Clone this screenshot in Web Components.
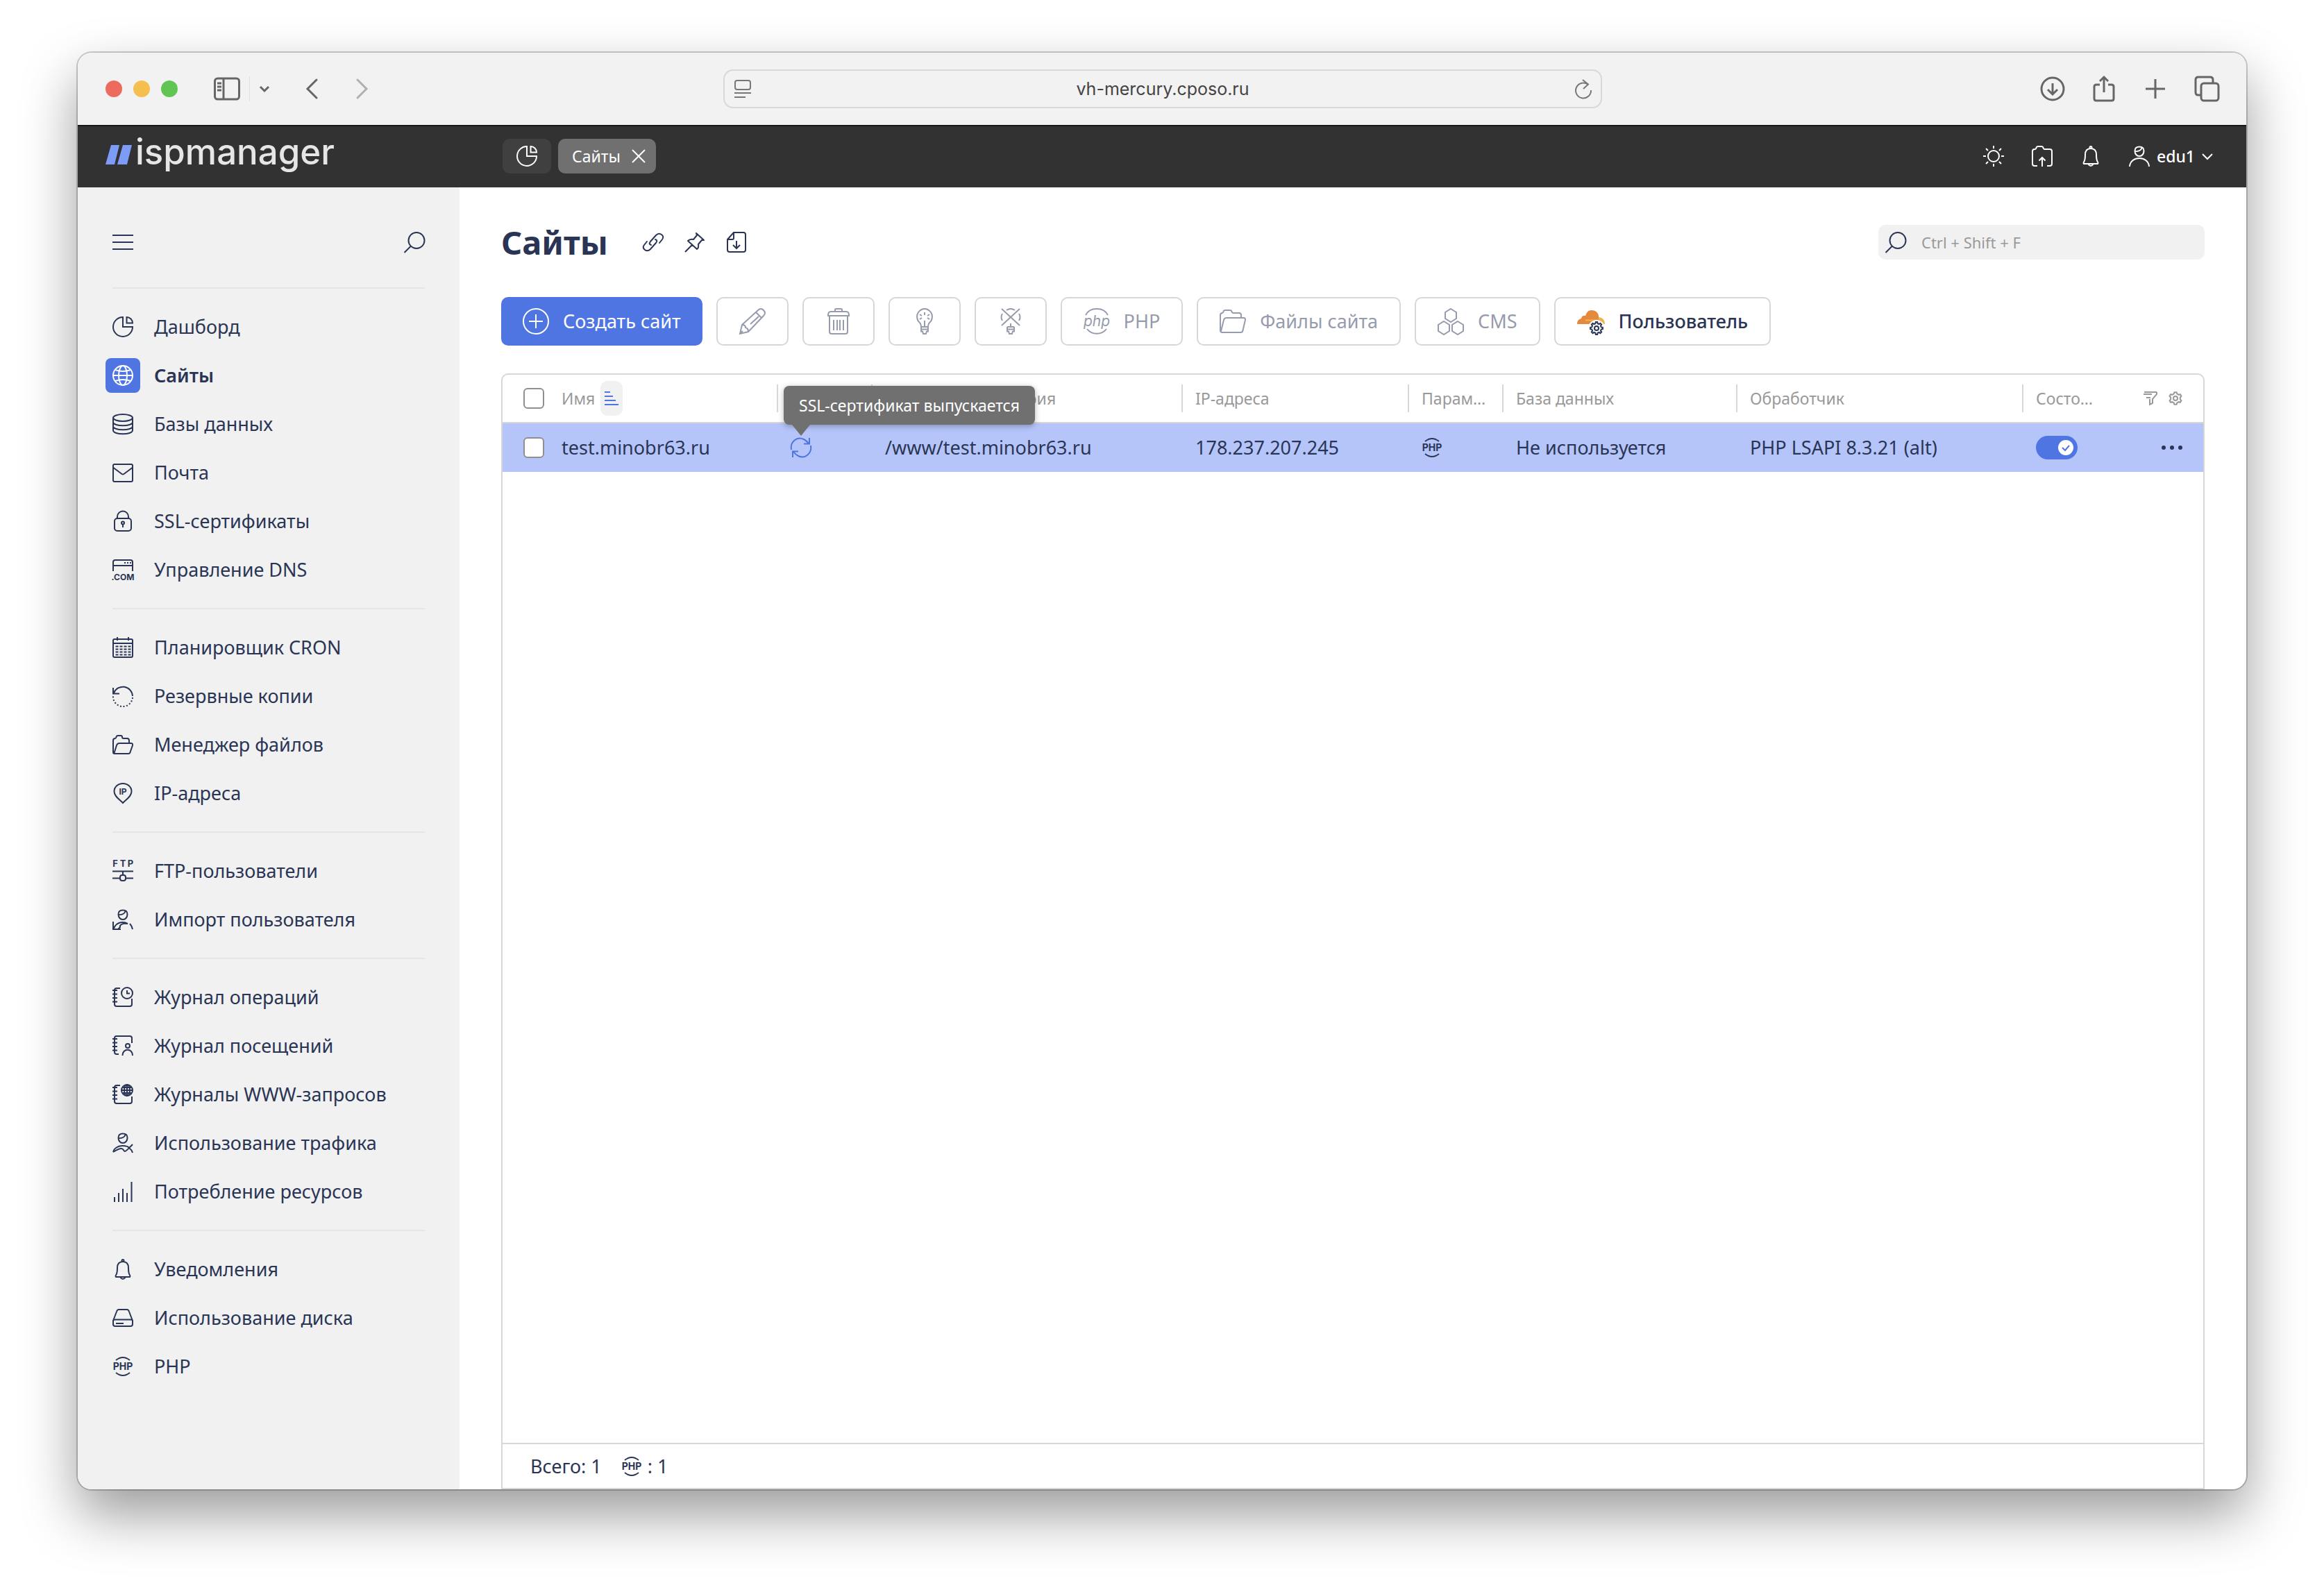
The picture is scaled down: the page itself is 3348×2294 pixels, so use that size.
<!DOCTYPE html>
<html lang="ru">
<head>
<meta charset="utf-8">
<title>Сайты</title>
<style>
  html, body { margin: 0; }
  body {
    --ui: "Noto Sans", "Open Sans", sans-serif;
    --ink: #2a3555;
    --blue: #4f75e3;
    --line: #d7d7d7;
    --panel: #f1f1f1;
    background: #fff;
    color: var(--ink);
    font: 400 27px/36px var(--ui);
  }
</style>
</head>
<body>
<mac-window>
  <browser-bar slot="bar"></browser-bar>
  <app-header slot="header"></app-header>
  <side-nav slot="nav">
    <nav-group>
      <nav-item icon="pie">Дашборд</nav-item>
      <nav-item icon="globe" active>Сайты</nav-item>
      <nav-item icon="db">Базы данных</nav-item>
      <nav-item icon="mail">Почта</nav-item>
      <nav-item icon="lock">SSL-сертификаты</nav-item>
      <nav-item icon="dns">Управление DNS</nav-item>
    </nav-group>
    <nav-group>
      <nav-item icon="calendar">Планировщик CRON</nav-item>
      <nav-item icon="restore">Резервные копии</nav-item>
      <nav-item icon="folder">Менеджер файлов</nav-item>
      <nav-item icon="ip">IP-адреса</nav-item>
    </nav-group>
    <nav-group>
      <nav-item icon="ftp">FTP-пользователи</nav-item>
      <nav-item icon="userimport">Импорт пользователя</nav-item>
    </nav-group>
    <nav-group>
      <nav-item icon="logclock">Журнал операций</nav-item>
      <nav-item icon="loguser">Журнал посещений</nav-item>
      <nav-item icon="logweb">Журналы WWW-запросов</nav-item>
      <nav-item icon="traffic">Использование трафика</nav-item>
      <nav-item icon="bars">Потребление ресурсов</nav-item>
    </nav-group>
    <nav-group>
      <nav-item icon="bell">Уведомления</nav-item>
      <nav-item icon="disk">Использование диска</nav-item>
      <nav-item icon="php">PHP</nav-item>
    </nav-group>
  </side-nav>
  <page-head>Сайты</page-head>
  <tool-bar>
    <tool-button kind="primary" icon="plus38">Создать сайт</tool-button>
    <tool-button icon="pencil" label="Изменить" disabled></tool-button>
    <tool-button icon="trash" label="Удалить" disabled></tool-button>
    <tool-button icon="bulb" label="Включить" disabled></tool-button>
    <tool-button icon="bulboff" label="Выключить" disabled></tool-button>
    <tool-button icon="php38" disabled>PHP</tool-button>
    <tool-button icon="folder38" disabled>Файлы сайта</tool-button>
    <tool-button icon="cms" disabled>CMS</tool-button>
    <tool-button icon="cloud">Пользователь</tool-button>
  </tool-bar>
  <sites-table></sites-table>
</mac-window>

<script>
const define = (name, html, setup) => {
  const tpl = document.createElement('template');
  tpl.innerHTML = '<style>*{box-sizing:border-box}button,input{font:inherit;color:inherit}button{border:0;background:none;padding:0;display:flex;align-items:center}</style>' + html;
  customElements.define(name, class extends HTMLElement {
    constructor() {
      super();
      this.attachShadow({ mode: 'open' }).append(tpl.content.cloneNode(true));
    }
    connectedCallback() { if (setup) setup(this, this.shadowRoot); }
  });
};

/* Outline of a cog wheel with n teeth, alternating between two radii. */
const gear = (cx, cy, outer, inner, n) => {
  const pts = [];
  for (let i = 0; i < n; i++) {
    [[-.3, inner], [-.17, outer], [.17, outer], [.3, inner]].forEach(([o, r]) => {
      const a = (i + o) / n * Math.PI * 2 - Math.PI / 2;
      pts.push((cx + r * Math.cos(a)).toFixed(2) + ' ' + (cy + r * Math.sin(a)).toFixed(2));
    });
  }
  return `<path d="M${pts.join('L')}Z"/>`;
};
const notebook = '<path d="M0 5h7M0 10.500h7M0 16h7M0 21.500h7"/>';
const head = '<path d="M8.500 7.500C8.500 3.500 11 1.500 15 1.500S21.500 3.500 21.500 7.500 19 15 15 15 8.500 11.500 8.500 7.500ZM8.500 8C13 8.500 17.500 7 18.500 3"/>';
const word = (t, x, y, s) => `<text x="${x}" y="${y}" font-size="${s}" text-anchor="middle" stroke="none" fill="currentColor" font-family="Inter, sans-serif" font-weight="700">${t}</text>`;
const bulbBase = '<path d="M14 27h10M14 30.500h10v3h-2l-1 3.500h-4l-1-3.500h-2zM14 27v4M24 27v4"/>';

const ICONS = {
  menu: [30, '<path d="M0 5h30M0 15h30M0 25h30"/>'],
  search: [30, '<circle cx="18" cy="12.500" r="11.500"/><path d="M10 20.500 0.500 30"/>'],
  pie: [30, '<path d="M15 1A14 14 0 1 0 29 15H15ZM20.500 1v8.500H29A8.500 8.500 0 0 0 20.500 1Z"/>'],
  globe: [30, '<circle cx="15" cy="15" r="14"/><ellipse cx="15" cy="15" rx="6" ry="14"/><path d="M1 15h28M4 7q11 4 22 0M4 23q11-4 22 0"/>'],
  db: [30, '<ellipse cx="15" cy="6" rx="14" ry="5"/><path d="M1 6v18c0 7 28 7 28 0V6M1 12c0 7 28 7 28 0M1 18c0 7 28 7 28 0"/>'],
  mail: [30, '<rect x="1" y="3" width="28" height="25" rx="2"/><path d="M1.500 8 13.500 17q1.500 1 3 0L28.500 8"/>'],
  lock: [30, '<rect x="3" y="11" width="24" height="18" rx="4"/><path d="M7 12V8.500a8 8 0 0 1 16 0V12M15 19v5"/><circle cx="15" cy="17.500" r="2"/>'],
  dns: [30, '<path d="M1 17V4q0-3 3-3h22q3 0 3 3v13M1 9h28"/><path d="M17 5h10" stroke-dasharray="2 2"/>' + word('.COM', 15, 30, 12)],
  calendar: [30, '<rect x="1" y="3" width="28" height="26" rx="2"/><path d="M1 9h28M7 0v5M23 0v5"/><path d="M4.500 13.500h22M4.500 17.500h22M4.500 21.500h22M4.500 25.500h22" stroke-dasharray="4 2"/>'],
  restore: [30, '<path d="M1 3v8.500h9M2 10.500A14 14 0 0 1 29 15"/><path d="M29 17A14 14 0 0 1 1 15" stroke-dasharray="2 2.600"/>'],
  folder: [30, '<path d="M3 28q-2 0-2-2V9q0-3 3-3 1 0 1.500-2T8 2h4q2 0 2 2t2 2h5q3 0 3 3v4M3 28h20q2 0 2.500-2l3.500-10q.500-3-2-3H10q-3 0-4 3L2.500 27"/>'],
  ip: [30, '<path d="M15 29C10 24 2.500 19.500 2.500 12.500 2.500 6 8 1 15 1S27.500 6 27.500 12.500C27.500 19.500 20 24 15 29Z"/>' + word('IP', 15, 17, 12)],
  ftp: [30, word('F', 4, 9, 13) + word('T', 15, 9, 13) + word('P', 26, 9, 13) + '<path d="M0 15.500h30M15 16v5M0 25.500h11M19 25.500h11"/><rect x="11" y="21" width="8" height="8" rx="3"/>'],
  userimport: [30, head + '<path d="M1 18v11h11M1 29l3-5q4-5 11-5 4 0 7 2-6-1-9 1t-2 4l-3 3M25 21q3 3 4 8"/>'],
  logclock: [30, notebook + '<path d="M11 2H6q-3 0-3 3v20q0 3 3 3h19q3 0 3-3v-8"/><circle cx="21" cy="9" r="8"/><path d="M21 5v4.500h4"/>'],
  loguser: [30, notebook + '<path d="M9 27H6q-3 0-3-3V4q0-3 3-3h19q3 0 3 3v7"/><circle cx="22" cy="15" r="3"/><path d="M14.500 29c0-11 14.500-11 14.500 0"/>'],
  logweb: [30, notebook + '<path d="M11 2H6q-3 0-3 3v20q0 3 3 3h19q3 0 3-3v-7"/><circle cx="21" cy="9" r="8"/><path d="M13 9h16M21 1v16M15 5h12M15 13h12"/><ellipse cx="21" cy="9" rx="4" ry="8"/>'],
  traffic: [30, head + '<path d="M1 28q1-4 4-6 4-3 9-3 9 0 11 4 3 2 4 6M1 28q8-5 12-5c3 0 3 4 5 4s6-5 11-10"/>'],
  bars: [30, '<path d="M3 23v7M9 17v13M15 11v19M21 17v13M27.500 1v29"/>'],
  bell: [30, '<path d="M5 26q-1-1 0-2.500Q7 21 7 13 7 4 15 4t8 9q0 8 2 10.500 1 1.500 0 2.500ZM11 26q4 6 8 0"/><circle cx="15" cy="2.500" r="1.500"/>'],
  disk: [30, '<path d="M1 19v5q0 3 3 3h22q3 0 3-3v-5q0-1.500-3-1.500H4Q1 17.500 1 19L6 6q1-3 3-3h12q2 0 3 3l5 13M5 23h11"/>'],
  php: [30, word('PHP', 15, 20, 14) + '<path d="M5 6q10-8 20 0M5 24q10 8 20 0"/>'],
  link: [30, '<path d="M12 19q-4-1-1-5l8-9q4-4 8-1t1 7l-4 5M18 11q4 1 1 5l-8 9q-4 4-8 1t-1-7l4-5" stroke-linecap="round"/>'],
  pin: [30, '<path d="M1 29 12 18M17 2l11 10-3 0-5 6q1 5-2 7L5 13q3-3 8-2l5-6Z" stroke-linejoin="round"/>'],
  file: [30, '<path d="M2 11 11 1h14q3 0 3 3v22q0 3-3 3H5q-3 0-3-3ZM2 11h7q2 0 2-2V1M15 13v10M10 19l5 5 5-5"/>'],
  sun: [30, '<circle cx="15" cy="15" r="8"/><path d="M15 0v4M15 26v4M0 15h4M26 15h4M4 4l3 3M23 23l3 3M4 26l3-3M23 7l3-3"/>'],
  upload: [30, '<path d="M8 29H4q-3 0-3-3V8q0-3 3-3h1q1 0 1.500-2T9 1h5q2 0 2.500 2T18 5h8q3 0 3 3v18q0 3-3 3h-4M15 30V17M10.500 21.500 15 17l4.500 4.500"/>'],
  user: [30, head + '<path d="M1 30c1-16 27-16 28 0"/>'],
  chev: [16, '<path d="M1 5l7 7 7-7"/>'],
  close: [20, '<path d="M1 1l18 18M19 1 1 19"/>'],
  sort: [20, '<path d="M0 1h8M0 7h12M0 13h16M0 19h20"/>'],
  filter: [20, '<path d="M19 1H1M19 1v3l-6 7v6l-4 2v-8M0 4h12M4 9h6"/>'],
  cog: [20, gear(10, 10, 9, 7, 6) + '<circle cx="10" cy="10" r="3"/>'],
  dots: [30, '<g fill="currentColor" stroke="none"><circle cx="3" cy="15" r="3"/><circle cx="15" cy="15" r="3"/><circle cx="27" cy="15" r="3"/></g>'],
  sync: [30, '<path d="M1 18C-1 7 9-2 19 3q4 2 7 6M27 1v8.500h-8M29 12c2 11-8 20-18 15q-4-2-7-6M3 29v-8.500h8"/>'],
  plus38: [38, '<circle cx="19" cy="19" r="18"/><path d="M19 9v20M9 19h20"/>'],
  pencil: [38, '<path d="M1 37 4 24 27 3q4-4 8 0t0 8L13 34ZM24 6l8 8M4 24q5 0 5 4 4 1 4 6M28 12 16 23M1 37l4-4"/>'],
  trash: [38, '<path d="M4 10q0-5 4-5h22q4 0 4 5v1H4ZM14 5V2q0-1 2-1h6q2 0 2 1v3M6 11v23q0 3 3 3h20q3 0 3-3V11M12 17v15M17 17v15M21 17v15M26 17v15"/>'],
  bulb: [38, '<path d="M14 27q0-5-4-8-4-7 0-13 4-5 9-5t9 5q4 6 0 13-4 3-4 8M19 26v-8M19 6v4M12 9l3 2M26 9l-3 2M12 16l3-2M26 16l-3-2"/>' + bulbBase],
  bulboff: [38, '<path d="M6 1l26 24M32 1 6 25M13 3q6-4 12 0M7 8q-3 5 0 10M31 8q3 5 0 10M19 22v5"/>' + bulbBase],
  php38: [38, '<text x="19" y="26" font-size="21" font-style="italic" text-anchor="middle" stroke="none" fill="currentColor" font-family="Inter, sans-serif">php</text><path d="M3 10c6-12 26-12 32 0M5 30c7 9 21 9 28 0"/>'],
  folder38: [38, '<path d="M4 35q-3 0-3-3V10q0-3 3-3 1 0 1.500-2T8 3h7q2 0 2.500 2T20 7h8q3 0 3 3v4M4 35h26q3 0 3.500-3L37 17q0-3-2-3H10q-3 0-4 3L2 33"/>'],
  cms: [38, '<path d="M19 1l8 5v9l-8 5-8-5V6ZM9 19l8 5v9l-8 5-8-5v-9ZM29 19l8 5v9l-8 5-8-5v-9Z"/>'],
  cloud: [40, '<path d="M31 24q-2-5 0-10 9 1 9 10Z" fill="#f3b04f" stroke="none"/><path d="M0 24q0-7 6-8 1-5 6-4Q14 4 21 4q8 0 10 8v4l-3 8Z" fill="#e5893f" stroke="none"/><path d="M12 18.500h17" stroke="#f3b04f"/><circle cx="28" cy="30" r="12" fill="#fff" stroke="none"/>' + gear(28, 30, 9, 7, 8) + '<circle cx="28" cy="30" r="3"/>'],
  mSide: [38, '<rect x="1.500" y="4" width="35" height="30" rx="4"/><path d="M14 4v30M5 11h6M5 16h6M5 21h6"/>'],
  mBack: [30, '<path d="M22 2 9 15l13 13" stroke-linecap="round"/>'],
  mFwd: [30, '<path d="M8 2l13 13L8 28" stroke-linecap="round"/>'],
  mChev: [16, '<path d="M2 5l6 6 6-6"/>'],
  mReader: [28, '<rect x="3" y="2" width="22" height="13" rx="3"/><path d="M2 20h24M2 26h16"/>'],
  mReload: [30, '<path d="M22 9A11 11 0 1 0 26 17M14 2l8 6.500-7 6.500"/>'],
  mDown: [38, '<circle cx="19" cy="19" r="16"/><path d="M19 11v16M12 20l7 7 7-7"/>'],
  mShare: [38, '<path d="M13 13H8q-3 0-3 3v17q0 3 3 3h22q3 0 3-3V16q0-3-3-3h-5M19 24V2M13 8l6-6 6 6"/>'],
  mPlus: [38, '<path d="M19 5v28M5 19h28"/>'],
  mTabs: [38, '<rect x="11" y="11" width="25" height="25" rx="4"/><path d="M11 28H7q-4 0-4-4V6q0-4 4-4h17q4 0 4 4v5"/>'],
};

define('ui-icon', `
  <style>
    :host { display: block; flex: none; }
    svg { display: block; overflow: visible; fill: none; stroke: currentColor; stroke-width: var(--sw, 2); }
  </style><span></span>`, (el, root) => {
  const [size, body] = ICONS[el.getAttribute('name')];
  root.querySelector('span').innerHTML = `<svg width="${size}" height="${size}" viewBox="0 0 ${size} ${size}" aria-hidden="true">${body}</svg>`;
});

define('mac-window', `
  <style>
    :host { display: flex; min-height: 100vh; box-sizing: border-box; padding: 76px 112px 148px; }
    .frame { flex: 1; display: flex; flex-direction: column; border-radius: 20px; overflow: hidden; background: #fff;
      box-shadow: 0 0 0 2px rgba(0,0,0,.2), 0 36px 80px rgba(0,0,0,.4); }
    .body { flex: 1; display: grid; grid-template-columns: 550px 1fr; }
    main { display: flex; flex-direction: column; padding: 44px 60px 0; min-width: 0; }
  </style>
  <div class="frame">
    <slot name="bar"></slot>
    <slot name="header"></slot>
    <div class="body"><slot name="nav"></slot><main><slot></slot></main></div>
  </div>`);

define('browser-bar', `
  <style>
    :host { display: grid; grid-template-columns: 1fr 1266px 1fr; align-items: center; height: 104px; box-sizing: border-box;
      padding: 0 38px 0 40px; background: #f2f2f2; color: #666; --sw: 3; }
    .left, .right { display: flex; align-items: center; }
    .right { justify-content: flex-end; gap: 36px; }
    .lights { display: flex; gap: 16px; margin-right: 52px; }
    .lights i { width: 24px; height: 24px; border-radius: 50%; }
    .sep { width: 1px; height: 36px; background: #e0e0e0; margin: 0 13px; }
    .back { margin: 0 43px 0 45px; }
    .off { color: #b0b0b0; }
    .url { display: flex; align-items: center; height: 56px; padding: 0 10px 0 12px; border: 2px solid #d8d8d8; border-radius: 14px; color: #777; }
    .url input { flex: 1; min-width: 0; border: 0; background: none; text-align: center; color: #444; font: 400 25px/32px Inter, sans-serif; }
    .url ui-icon { --sw: 2; }
  </style>
  <div class="left">
    <div class="lights"><i style="background:#ec6a5e"></i><i style="background:#f4bf4f"></i><i style="background:#61c554"></i></div>
    <button aria-label="Боковая панель"><ui-icon name="mSide"></ui-icon></button><span class="sep"></span>
    <button aria-label="Группы вкладок"><ui-icon name="mChev"></ui-icon></button>
    <button class="back" aria-label="Назад"><ui-icon name="mBack"></ui-icon></button>
    <button class="off" aria-label="Вперёд"><ui-icon name="mFwd"></ui-icon></button>
  </div>
  <div class="url"><ui-icon name="mReader"></ui-icon><input aria-label="Адрес" value="vh-mercury.cposo.ru"><ui-icon name="mReload"></ui-icon></div>
  <div class="right">
    <button aria-label="Загрузки"><ui-icon name="mDown"></ui-icon></button>
    <button aria-label="Поделиться"><ui-icon name="mShare"></ui-icon></button>
    <button aria-label="Новая вкладка"><ui-icon name="mPlus"></ui-icon></button>
    <button aria-label="Все вкладки"><ui-icon name="mTabs"></ui-icon></button>
  </div>`);

define('app-header', `
  <style>
    :host { display: flex; align-items: center; height: 90px; box-sizing: border-box; padding: 0 48px 0 40px; background: #323232;
      box-shadow: inset 0 2px #161616; color: #fff; }
    .logo { display: flex; align-items: baseline; align-self: flex-start; gap: 5px; width: 572px; font: 500 51px/78px Inter, sans-serif; color: #e6e6e6; text-decoration: none; }
    .tabs { display: flex; gap: 10px; }
    .tab { height: 50px; padding: 0 20px; border-radius: 10px; background: #404040; }
    .tab.on { padding: 0 15px 0 20px; gap: 16px; background: #707070; font-size: 23px; }
    .right { display: flex; align-items: center; gap: 40px; margin-left: auto; }
    .user { gap: 10px; font-size: 23px; font-weight: 500; }
  </style>
  <a class="logo" href="#"><svg width="38" height="28" viewBox="0 0 38 28" aria-hidden="true"><path d="M8 0h12l-7 28H0ZM25 0h13l-7 28H17Z" fill="#7c9cf8"/></svg><span>ispmanager</span></a>
  <div class="tabs">
    <button class="tab" aria-label="Дашборд"><ui-icon name="pie"></ui-icon></button>
    <button class="tab on"><span>Сайты</span><ui-icon name="close"></ui-icon></button>
  </div>
  <div class="right">
    <button aria-label="Тема"><ui-icon name="sun"></ui-icon></button>
    <button aria-label="Файлы"><ui-icon name="upload"></ui-icon></button>
    <button aria-label="Уведомления"><ui-icon name="bell"></ui-icon></button>
    <button class="user"><ui-icon name="user"></ui-icon><span>edu1</span><ui-icon name="chev"></ui-icon></button>
  </div>`);

define('side-nav', `
  <style>
    :host { display: block; background: var(--panel); padding: 44px 50px 0; }
    .top { display: flex; justify-content: space-between; height: 70px; margin-bottom: 30px; }
  </style>
  <div class="top"><button aria-label="Меню"><ui-icon name="menu"></ui-icon></button><button aria-label="Поиск"><ui-icon name="search"></ui-icon></button></div>
  <nav><slot></slot></nav>`);

define('nav-group', `
  <style>:host { display: block; border-top: 2px solid #e5e5e5; padding: 20px 0; }</style>
  <slot></slot>`);

define('nav-item', `
  <style>
    :host { display: block; }
    a { display: flex; align-items: center; gap: 20px; height: 70px; margin-left: -10px; color: inherit; text-decoration: none; white-space: nowrap; }
    .box { display: grid; place-items: center; width: 50px; height: 50px; border-radius: 8px; }
    :host([active]) .box { background: var(--blue); color: #fff; }
    :host([active]) a { font-weight: 600; }
  </style>
  <a href="#"><span class="box"></span><span><slot></slot></span></a>`, (el, root) => {
  root.querySelector('.box').innerHTML = `<ui-icon name="${el.getAttribute('icon')}"></ui-icon>`;
});

define('page-head', `
  <style>
    :host { display: flex; align-items: center; height: 70px; margin-bottom: 44px; }
    h1 { margin: 0 50px 0 0; font-size: 47px; line-height: 64px; font-weight: 700; }
    .acts { display: flex; gap: 30px; }
    label { display: flex; align-items: center; gap: 22px; width: 470px; height: 50px; margin-left: auto; padding: 0 10px; border-radius: 10px; background: var(--panel); }
    input { flex: 1; min-width: 0; border: 0; padding: 0; background: none; font-size: 22px; }
    input::placeholder { color: #999; opacity: 1; }
  </style>
  <h1><slot></slot></h1>
  <div class="acts">
    <button aria-label="Ссылка"><ui-icon name="link"></ui-icon></button>
    <button aria-label="Закрепить"><ui-icon name="pin"></ui-icon></button>
    <button aria-label="Экспорт"><ui-icon name="file"></ui-icon></button>
  </div>
  <label><ui-icon name="search"></ui-icon><input placeholder="Ctrl + Shift + F" aria-label="Поиск"></label>`);

define('tool-bar', `
  <style>:host { display: flex; gap: 20px; margin-bottom: 40px; }</style><slot></slot>`);

define('tool-button', `
  <style>
    :host { display: block; }
    button { gap: 20px; height: 70px; padding: 0 31px; border: 2px solid var(--line); border-radius: 10px; background: #fff; white-space: nowrap; }
    button:disabled { color: #969bad; }
    :host([kind=primary]) button { padding: 0 29px; background: var(--blue); border-color: var(--blue); color: #fff; }
    :host([icon=cloud]) button { font-weight: 500; }
  </style>
  <button></button>`, (el, root) => {
  const b = root.querySelector('button');
  b.disabled = el.hasAttribute('disabled');
  const label = el.getAttribute('label');
  if (label) b.setAttribute('aria-label', label);
  b.innerHTML = `<ui-icon name="${el.getAttribute('icon')}"></ui-icon>` + (label ? '' : '<span><slot></slot></span>');
});

define('tool-tip', `
  <style>
    :host { position: absolute; left: -10px; bottom: 48px; z-index: 1; padding: 10px 22px; border-radius: 8px; background: #707070; color: #fff;
      font-size: 23px; line-height: 36px; white-space: nowrap; box-shadow: 0 2px 8px rgba(0,0,0,.3); }
    :host::after { content: ""; position: absolute; left: 12px; top: 100%; border: 13px solid transparent; border-top: 16px solid #707070; border-bottom: 0; }
  </style><slot></slot>`);

define('check-box', `
  <style>
    :host { display: block; }
    input { appearance: none; display: block; width: 30px; height: 30px; margin: 0; border: 2px solid #8f8f8f; border-radius: 6px; background: #fff; }
  </style><input type="checkbox" aria-label="Выбрать">`);

define('toggle-switch', `
  <style>
    :host { display: block; }
    label { display: flex; align-items: center; justify-content: flex-end; position: relative; width: 60px; height: 34px; padding: 0 6px; border-radius: 17px; background: var(--blue); }
    input { appearance: none; position: absolute; inset: 0; margin: 0; }
    svg { border-radius: 50%; background: #fff; fill: none; stroke: var(--blue); stroke-width: 2; }
  </style>
  <label><input type="checkbox" checked aria-label="Состояние"><svg width="22" height="22" viewBox="0 0 22 22" aria-hidden="true"><path d="M6 11l4 4 6-7"/></svg></label>`);

define('sites-table', `
  <style>
    :host { flex: 1; display: flex; flex-direction: column; border: 2px solid var(--line); border-radius: 10px 10px 0 0; }
    table { width: 100%; table-layout: fixed; border-collapse: separate; border-spacing: 0; }
    th, td { padding: 0; text-align: left; font-weight: 400; white-space: nowrap; }
    th { height: 70px; border-bottom: 2px solid var(--line); color: #999; font-size: 23px; }
    th div { display: flex; align-items: center; height: 40px; padding-left: 20px; }
    th.s div { border-left: 2px solid var(--line); padding-left: 18px; }
    td { height: 70px; padding-left: 20px; background: #b5c5fa; }
    th div.pick, td.pick { padding-left: 30px; }
    .sort { display: grid; place-items: center; width: 32px; height: 50px; margin-left: 8px; border-radius: 10px; background: var(--panel); color: var(--blue); }
    .sync { position: relative; width: 30px; color: var(--blue); }
    th div.acts, td div.acts { display: flex; justify-content: flex-end; gap: 16px; padding: 0 30px 0 0; }
    footer { display: flex; align-items: center; gap: 28px; height: 65px; margin-top: auto; padding-left: 40px; border-top: 2px solid var(--line); }
    footer span { display: flex; align-items: center; gap: 8px; }
  </style>
  <table>
    <colgroup><col style="width:65px"><col style="width:330px"><col style="width:136px"><col><col style="width:326px"><col style="width:136px"><col style="width:337px"><col style="width:412px"><col style="width:147px"><col style="width:114px"></colgroup>
    <thead><tr>
      <th><div class="pick"><check-box></check-box></div></th>
      <th><div>Имя<button class="sort" aria-label="Сортировка"><ui-icon name="sort"></ui-icon></button></div></th>
      <th class="s"><div></div></th>
      <th class="s"><div>Корневая директория</div></th>
      <th class="s"><div>IP-адреса</div></th>
      <th class="s"><div>Парам…</div></th>
      <th class="s"><div>База данных</div></th>
      <th class="s"><div>Обработчик</div></th>
      <th class="s"><div>Состо…</div></th>
      <th><div class="acts"><button aria-label="Фильтр"><ui-icon name="filter"></ui-icon></button><button aria-label="Настройки"><ui-icon name="cog"></ui-icon></button></div></th>
    </tr></thead>
    <tbody><tr>
      <td class="pick"><check-box></check-box></td>
      <td>test.minobr63.ru</td>
      <td><div class="sync"><ui-icon name="sync"></ui-icon><tool-tip>SSL-сертификат выпускается</tool-tip></div></td>
      <td>/www/test.minobr63.ru</td>
      <td>178.237.207.245</td>
      <td><ui-icon name="php"></ui-icon></td>
      <td>Не используется</td>
      <td>PHP LSAPI 8.3.21 (alt)</td>
      <td><toggle-switch></toggle-switch></td>
      <td><div class="acts"><button aria-label="Ещё"><ui-icon name="dots"></ui-icon></button></div></td>
    </tr></tbody>
  </table>
  <footer><span>Всего: 1</span><span><ui-icon name="php"></ui-icon><span>: 1</span></span></footer>`);
</script>
</body>
</html>
